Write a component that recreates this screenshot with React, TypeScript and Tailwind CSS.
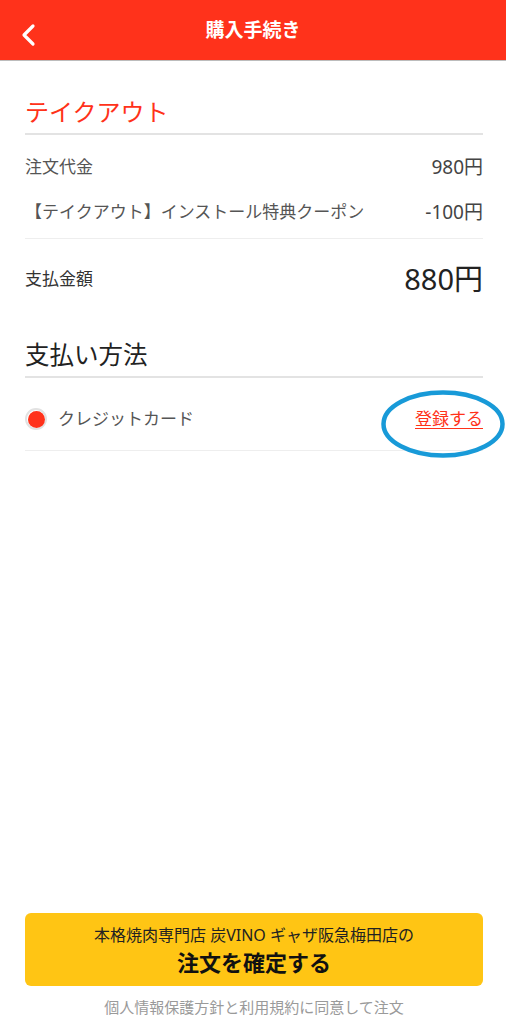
const font = { fontFamily: '"Noto Sans", "Noto Sans CJK JP", sans-serif' }

function Row({ label, value }: { label: string; value: string }) {
  return (
    <div className="flex h-[24px] items-center justify-between text-[17px] leading-[24px] text-[#555]">
      <span>{label}</span>
      <span className="text-[19px] text-[#444]">{value}</span>
    </div>
  )
}

export default function App() {
  return (
    <div style={font} className="flex min-h-screen w-full flex-col bg-white">
      <header className="relative flex h-[61px] items-center justify-center border-b border-[#bcbcbc] bg-[#ff321b]">
        <button className="absolute left-[16px] top-[19px] p-1">
          <svg width="20" height="24" viewBox="0 0 20 24" fill="none">
            <path d="M13 3 L4 12 L13 21" stroke="#fff" strokeWidth="3.2" strokeLinecap="round" strokeLinejoin="round" />
          </svg>
        </button>
        <h1 className="text-[19px] font-bold leading-[28px] text-white">購入手続き</h1>
      </header>

      <main className="pl-[25px] pr-[23px]">
        <section className="pt-[35px]">
          <h2 className="text-[24px] leading-[32px] text-[#ff3219]">テイクアウト</h2>
          <div className="mt-[5px] h-[2px] bg-[#e3e3e3]" />
          <div className="flex flex-col gap-[21px] pt-[20px] pb-[14px]">
            <Row label="注文代金" value="980円" />
            <Row label="【テイクアウト】インストール特典クーポン" value="-100円" />
          </div>
          <div className="h-px bg-[#eeeeee]" />
          <div className="flex h-[36px] items-center justify-between mt-[22px]">
            <span className="text-[17px] text-[#333]">支払金額</span>
            <span className="text-[29px] leading-[36px] text-[#222]">880円</span>
          </div>
        </section>

        <section className="pt-[42px]">
          <h2 className="text-[24.5px] leading-[32px] text-[#222]">支払い方法</h2>
          <div className="mt-[5px] h-[2px] bg-[#e3e3e3]" />
          <div className="relative flex h-[72px] items-center justify-between pt-[10px]">
            <div className="flex items-center gap-[11px]">
              <div className="flex h-[22px] w-[22px] items-center justify-center rounded-full border-2 border-[#e2e2e2]">
                <div className="h-[17px] w-[17px] rounded-full bg-[#ff321b]" />
              </div>
              <span className="text-[17px] leading-[24px] text-[#555]">クレジットカード</span>
            </div>
            <a className="text-[17px] leading-[24px] text-[#ff3219] underline underline-offset-[3px]">登録する</a>
            <svg className="pointer-events-none absolute right-[-23px] top-[11px]" width="126" height="70" viewBox="0 0 126 70">
              <ellipse cx="63" cy="35" rx="59.5" ry="31.5" fill="none" stroke="#189ad8" strokeWidth="4.5" />
            </svg>
          </div>
          <div className="h-px bg-[#eeeeee]" />
        </section>
      </main>

      <footer className="mt-auto pl-[25px] pr-[23px] pb-[7px]">
        <button className="flex h-[73px] w-full flex-col items-center justify-center rounded-[6px] bg-[#ffc514]">
          <span className="text-[16px] leading-[24px] text-[#222]">本格焼肉専門店 炭VINO ギャザ阪急梅田店の</span>
          <span className="text-[22px] font-bold leading-[30px] text-[#111]">注文を確定する</span>
        </button>
        <p className="mt-[11px] text-center text-[15px] leading-[20px] text-[#9a9a9a]">個人情報保護方針と利用規約に同意して注文</p>
      </footer>
    </div>
  )
}
